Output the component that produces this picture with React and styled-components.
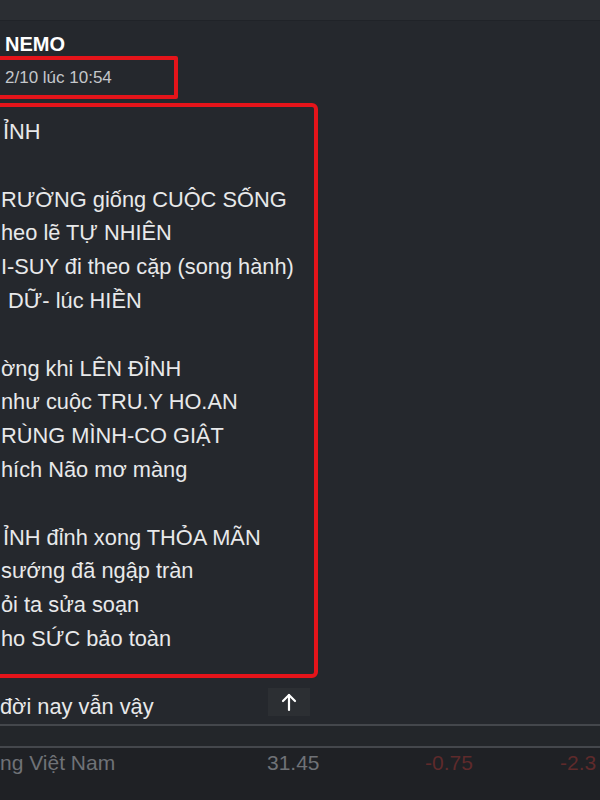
import React from 'react';
import styled, { createGlobalStyle } from 'styled-components';

const GlobalStyle = createGlobalStyle`
  html, body {
    margin: 0;
    padding: 0;
    background: #25282d;
    overflow: hidden;
  }
`;

const Page = styled.div`
  width: 600px;
  height: 800px;
  overflow: hidden;
  display: flex;
  flex-direction: column;
  background: #25282d;
  font-family: "Liberation Sans", Arial, sans-serif;
`;

const TopBar = styled.div`
  height: 20px;
  flex: none;
  background: #2b2e33;
  border-bottom: 1px solid #202328;
`;

const Post = styled.div`
  position: relative;
  display: flex;
  flex-direction: column;
  align-items: flex-start;
  padding-top: 11px;
`;

const Author = styled.div`
  padding-left: 5px;
  font-size: 20px;
  line-height: 24px;
  font-weight: 700;
  color: #ffffff;
`;

const Highlight = styled.div`
  box-sizing: border-box;
  margin-left: -10px;
  border: 4px solid #e5141a;
  border-radius: ${props => props.radius || 2}px;
  width: ${props => props.width}px;
`;

const TimeBox = styled(Highlight)`
  height: 43px;
  display: flex;
  align-items: center;
  padding-left: 11px;
  font-size: 17px;
  color: #c4c7cb;
`;

const PoemBox = styled(Highlight)`
  margin-top: 4px;
  padding: 8px 0 18px 7px;
`;

const Line = styled.div`
  height: 33.8px;
  line-height: 33.8px;
  font-size: 21.8px;
  color: #e8e9ea;
  white-space: nowrap;
  padding-left: ${props => props.indent || 0}px;
`;

const Tail = styled.div`
  position: relative;
  margin-top: 12px;
  width: 100%;
`;

const TopButton = styled.div`
  position: absolute;
  left: 268px;
  top: -2px;
  width: 42px;
  height: 28px;
  background: #2c2f33;
  display: flex;
  align-items: center;
  justify-content: center;
  color: #ffffff;
`;

const Divider = styled.div`
  flex: none;
  height: 2px;
  background: #44474c;
`;

const Gap = styled.div`
  flex: none;
  height: 20px;
  background: #23262a;
`;

const Market = styled.div`
  flex: none;
  height: 55px;
  background: #1f2125;
  display: grid;
  grid-template-columns: 267px 158px 135px 40px;
  align-items: start;
  font-size: 21px;
  line-height: 29px;
`;

const Cell = styled.div`
  color: ${props => props.tone === 'down' ? '#5e2a2b' : '#6f7277'};
  white-space: nowrap;
  overflow: hidden;
`;

const poem = [
  { t: 'ỈNH', i: 2 },
  { t: '' },
  { t: 'RƯỜNG giống CUỘC SỐNG', i: -1 },
  { t: 'heo lẽ TỰ NHIÊN' },
  { t: 'I-SUY đi theo cặp (song hành)' },
  { t: 'DỮ- lúc HIỀN', i: 7 },
  { t: '' },
  { t: 'ờng khi LÊN ĐỈNH' },
  { t: 'như cuộc TRU.Y HO.AN' },
  { t: 'RÙNG MÌNH-CO GIẬT', i: -1 },
  { t: 'hích Não mơ màng' },
  { t: '' },
  { t: 'ỈNH đỉnh xong THỎA MÃN', i: 2 },
  { t: 'sướng đã ngập tràn' },
  { t: 'ỏi ta sửa soạn' },
  { t: 'ho SỨC bảo toàn' }
];

const ArrowUp = () => (
  <svg width="16" height="20" viewBox="0 0 16 20" fill="none" stroke="currentColor" strokeWidth="2.2" strokeLinecap="round" strokeLinejoin="round">
    <path d="M8 18V3" />
    <path d="M2 9l6-6 6 6" />
  </svg>
);

const App = () => (
  <Page>
    <GlobalStyle />
    <TopBar />
    <Post>
      <Author>NEMO</Author>
      <TimeBox width={188}>2/10 lúc 10:54</TimeBox>
      <PoemBox width={328} radius={6}>
        {poem.map((l, n) => (
          <Line key={n} indent={l.i}>{l.t || '\u00a0'}</Line>
        ))}
      </PoemBox>
      <Tail>
        <Line indent={-1}>đời nay vẫn vậy</Line>
        <TopButton><ArrowUp /></TopButton>
      </Tail>
    </Post>
    <Divider style={{ marginTop: 'auto' }} />
    <Gap />
    <Divider />
    <Market>
      <Cell>ng Việt Nam</Cell>
      <Cell>31.45</Cell>
      <Cell tone="down">-0.75</Cell>
      <Cell tone="down">-2.3</Cell>
    </Market>
  </Page>
);

export default App;
